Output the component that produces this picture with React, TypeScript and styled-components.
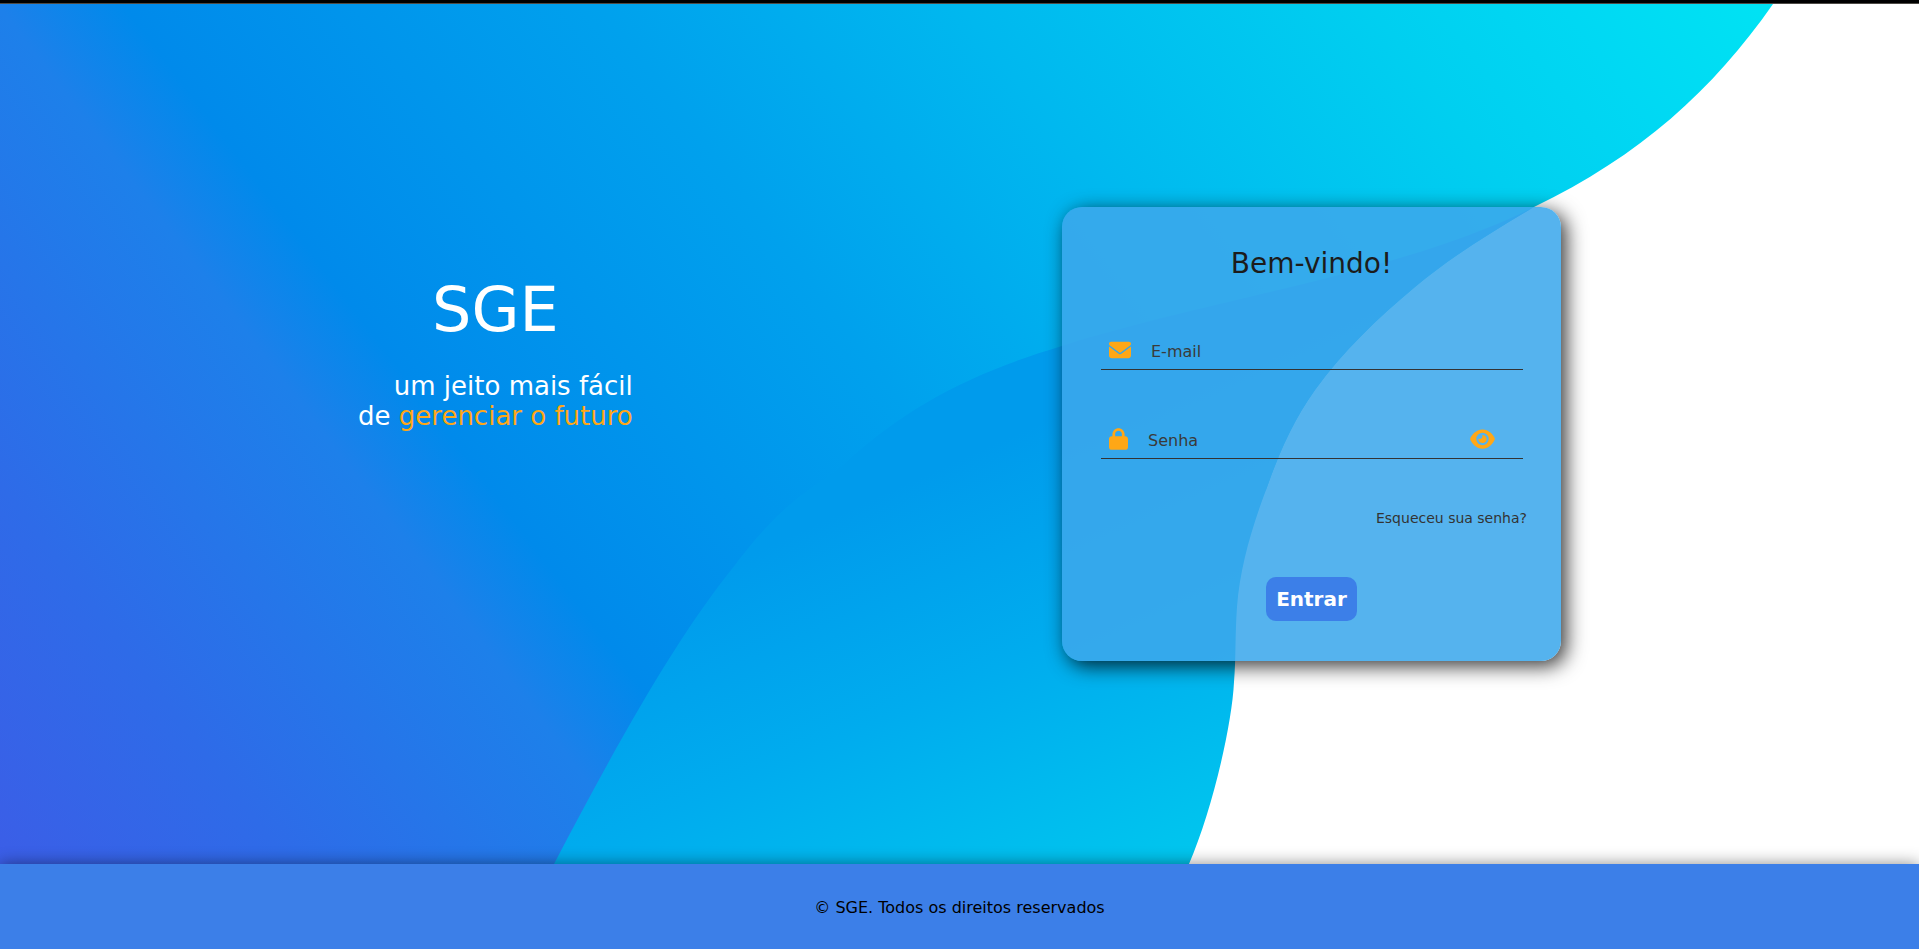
import React, { useState } from "react";
import styled, { createGlobalStyle } from "styled-components";
import { FaEnvelope, FaEye, FaLock } from "react-icons/fa6";

const GlobalStyle = createGlobalStyle`
  *, *::before, *::after { box-sizing: border-box; }
  body {
    margin: 0;
    background: #fff;
    font-family: "DejaVu Sans", Verdana, sans-serif;
    font-size: 16px;
  }
`;

const Page = styled.div`
  min-height: 100vh;
  display: flex;
  flex-direction: column;
`;

const TopBar = styled.header`
  height: 4px;
  background: #000;
  border-bottom: 1px solid #4d4a45;
`;

const Hero = styled.main`
  position: relative;
  flex: 1;
  display: flex;
  align-items: center;
  justify-content: center;
  padding: 40px 20px;
  overflow: hidden;
`;

const Backdrop = styled.svg`
  position: absolute;
  inset: 0;
  width: 100%;
  height: 100%;
`;

const Content = styled.div`
  position: relative;
  width: 100%;
  max-width: 1203px;
  display: flex;
  align-items: flex-start;
  justify-content: space-between;
  gap: 40px;
`;

const Intro = styled.section`
  padding-top: 65px;
  color: #fff;
`;

const Brand = styled.h1`
  margin: 0 0 23px;
  font-size: 62px;
  font-weight: 400;
  line-height: 76px;
  text-align: center;
`;

const Tagline = styled.p`
  margin: 0;
  font-size: 26px;
  line-height: 30px;
  text-align: right;
`;

const Highlight = styled.span`
  color: #ffa716;
`;

const Card = styled.form`
  width: 499px;
  display: flex;
  flex-direction: column;
  gap: 49px;
  padding: 40px 34px;
  border-radius: 20px;
  background: rgba(60, 168, 236, 0.87);
  box-shadow: 5px 5px 20px rgba(0, 0, 0, 0.8);
`;

const Title = styled.h2`
  margin: 0;
  color: #1c1c1c;
  font-size: 28px;
  font-weight: 400;
  line-height: 34px;
  text-align: center;
`;

const Field = styled.label`
  height: 40px;
  display: flex;
  align-items: center;
  gap: 20px;
  margin: 0 4px 0 5px;
  padding: 0 28px 0 8px;
  border-bottom: 1px solid #333;
  color: #ffa716;

  svg {
    flex: none;
    height: 22px;
    display: block;
  }
`;

const MailIcon = styled(FaEnvelope)`
  width: 22px;
`;

const LockIcon = styled(FaLock)`
  width: 19px;
`;

const EyeIcon = styled(FaEye)`
  width: 25px;
`;

const TextInput = styled.input`
  flex: 1;
  min-width: 0;
  padding: 4px 0 0;
  border: 0;
  outline: 0;
  background: transparent;
  color: #333;
  font: inherit;

  &::placeholder {
    color: #3a3a3a;
    opacity: 1;
  }
`;

const RevealButton = styled.button`
  padding: 0;
  border: 0;
  background: none;
  color: inherit;
  cursor: pointer;
`;

const ForgotLink = styled.a`
  align-self: flex-end;
  color: #333;
  font-size: 14px;
  line-height: 20px;
  text-decoration: none;
`;

const SubmitButton = styled.button`
  align-self: center;
  padding: 10px;
  border: 0;
  border-radius: 10px;
  background: #3c7fe8;
  color: #fff;
  font-family: inherit;
  font-size: 20px;
  font-weight: 700;
  line-height: 24px;
  cursor: pointer;
`;

const Footer = styled.footer`
  position: relative;
  padding: 34px 20px 31px;
  background: #3c7fe8;
  box-shadow: 0 0 15px rgba(0, 0, 0, 0.45);
  color: #000;
  line-height: 20px;
  text-align: center;
`;

function Waves() {
  return (
    <Backdrop viewBox="0 4 1919 860" preserveAspectRatio="none" aria-hidden="true">
      <defs>
        <linearGradient id="upper" gradientUnits="userSpaceOnUse" x1="0" y1="864" x2="1527" y2="-295">
          <stop offset="0" stopColor="#3b5ee7" />
          <stop offset="0.12" stopColor="#2e6be8" />
          <stop offset="0.27" stopColor="#1d80ea" />
          <stop offset="0.322" stopColor="#008aeb" />
          <stop offset="0.52" stopColor="#00a1ed" />
          <stop offset="0.67" stopColor="#00b8ef" />
          <stop offset="0.84" stopColor="#00cff0" />
          <stop offset="0.92" stopColor="#00d8f3" />
          <stop offset="1" stopColor="#00e2f3" />
        </linearGradient>
        <linearGradient id="lower" gradientUnits="userSpaceOnUse" x1="900" y1="430" x2="1111" y2="895">
          <stop offset="0.1" stopColor="#009bec" />
          <stop offset="0.5" stopColor="#00acee" />
          <stop offset="1" stopColor="#00c6ee" />
        </linearGradient>
      </defs>
      <path
        fill="url(#upper)"
        d="M0 4 H1773 C1713 90 1640 156 1534 207 C1492 232 1452 256 1415 287 C1377 319 1343 351 1315 390 C1293 421 1279 453 1266 490 L700 864 H0 Z"
      />
      <path
        fill="url(#lower)"
        d="M554 864 C618 742 676 638 735 565 C790 492 820 486 845 463 C910 404 975 372 1062 346 C1210 299 1400 274 1534 207 C1492 232 1452 256 1415 287 C1377 319 1343 351 1315 390 C1293 421 1279 453 1266 490 C1251 530 1240 568 1237 607 C1235 635 1236 660 1234 682 C1232 725 1212 811 1189 864 Z"
      />
    </Backdrop>
  );
}

export default function App() {
  const [visible, setVisible] = useState(false);

  return (
    <Page>
      <GlobalStyle />
      <TopBar />
      <Hero>
        <Waves />
        <Content>
          <Intro>
            <Brand>SGE</Brand>
            <Tagline>
              um jeito mais fácil
              <br />
              de <Highlight>gerenciar o futuro</Highlight>
            </Tagline>
          </Intro>
          <Card onSubmit={(event) => event.preventDefault()}>
            <Title>Bem-vindo!</Title>
            <Field htmlFor="email">
              <MailIcon />
              <TextInput id="email" type="email" placeholder="E-mail" aria-label="E-mail" />
            </Field>
            <Field htmlFor="password">
              <LockIcon />
              <TextInput
                id="password"
                type={visible ? "text" : "password"}
                placeholder="Senha"
                aria-label="Senha"
              />
              <RevealButton type="button" aria-label="Mostrar senha" onClick={() => setVisible(!visible)}>
                <EyeIcon />
              </RevealButton>
            </Field>
            <ForgotLink href="#">Esqueceu sua senha?</ForgotLink>
            <SubmitButton type="submit">Entrar</SubmitButton>
          </Card>
        </Content>
      </Hero>
      <Footer>© SGE. Todos os direitos reservados</Footer>
    </Page>
  );
}
